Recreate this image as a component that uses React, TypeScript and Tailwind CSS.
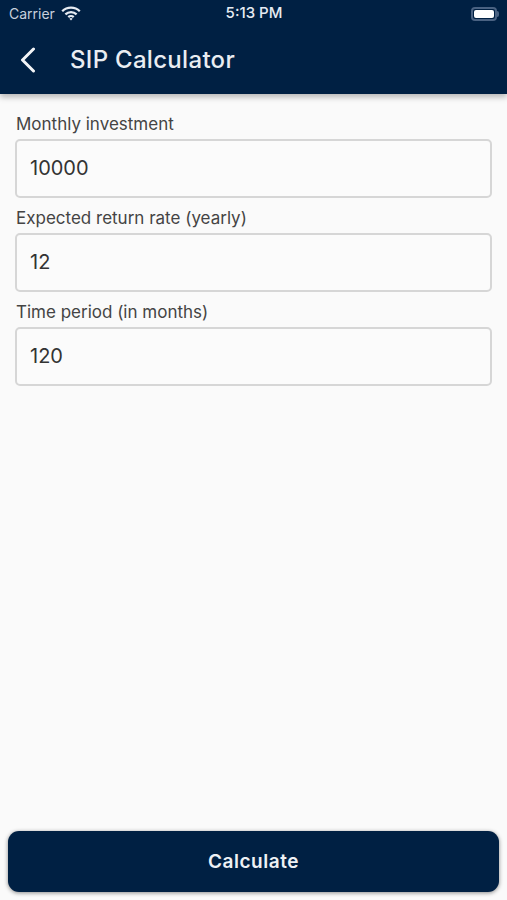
function Field({ label, value }: { label: string; value: string }) {
  return (
    <div>
      <p className="h-[29px] pl-px pt-[2px] text-[17px] leading-[24px] text-[#444444]">{label}</p>
      <div className="flex h-[59px] items-center rounded-[5px] border-2 border-[#d6d6d6] bg-[#fbfbfb] pb-[2px] pl-[13px] text-[20px] text-[#333333]">
        {value}
      </div>
    </div>
  );
}

function Wifi() {
  return (
    <svg width="20" height="15" viewBox="0 0 20 15" fill="none" stroke="#e6ebf2" strokeWidth="2.3">
      <path d="M1.2 5.2a12.6 12.6 0 0 1 17.6 0" />
      <path d="M4.4 8.4a8 8 0 0 1 11.2 0" />
      <path d="M7.3 11.2a3.9 3.9 0 0 1 5.4 0" />
      <path d="M10 14.6l-1.6-1.9a2.4 2.4 0 0 1 3.2 0z" fill="#e6ebf2" stroke="none" />
    </svg>
  );
}

function Battery() {
  return (
    <div className="flex items-center">
      <div className="flex h-[14px] w-[26px] items-center rounded-[4px] border-2 border-[#4a6282] p-[1px]">
        <div className="h-full w-full rounded-[2px] bg-white" />
      </div>
      <div className="h-[6px] w-[2px] rounded-r-[2px] bg-[#4a6282]" />
    </div>
  );
}

export default function App() {
  return (
    <div className="flex h-[900px] w-[507px] flex-col overflow-hidden bg-[#fafafa] font-['Inter',sans-serif]">
      <header className="relative z-10 h-[94px] bg-[#002043] shadow-[0_3px_6px_rgba(0,0,0,0.28)]">
        <div className="grid h-[27px] grid-cols-3 items-center pl-[9px] pr-[8px] text-[14px]">
          <div className="flex items-center gap-[6px] text-[#c8d0dc]">
            <span>Carrier</span>
            <Wifi />
          </div>
          <span className="text-center text-[15px] font-medium text-[#e6ebf2]">5:13 PM</span>
          <div className="flex justify-end">
            <Battery />
          </div>
        </div>
        <div className="flex h-[65px] items-center pl-[20px]">
          <svg width="16" height="26" viewBox="0 0 16 26" fill="none" stroke="#f2f4f7" strokeWidth="3" strokeLinecap="round" strokeLinejoin="round">
            <path d="M13.5 2L2.5 13l11 11" />
          </svg>
          <h1 className="ml-[34px] text-[24px] font-medium tracking-[0.3px] text-[#e9edf2]">SIP Calculator</h1>
        </div>
      </header>

      <main className="flex flex-1 flex-col px-[15px] pt-[16px]">
        <div className="flex flex-col gap-[6px]">
          <Field label="Monthly investment" value="10000" />
          <Field label="Expected return rate (yearly)" value="12" />
          <Field label="Time period (in months)" value="120" />
        </div>
      </main>

      <div className="px-[8px] pb-[8px]">
        <button className="flex h-[61px] w-full items-center justify-center rounded-[11px] bg-[#002043] pt-[2px] text-[19px] font-semibold tracking-[0.55px] text-[#eef1f5] shadow-[0_1px_4px_rgba(0,0,0,0.45)]">
          Calculate
        </button>
      </div>
    </div>
  );
}
